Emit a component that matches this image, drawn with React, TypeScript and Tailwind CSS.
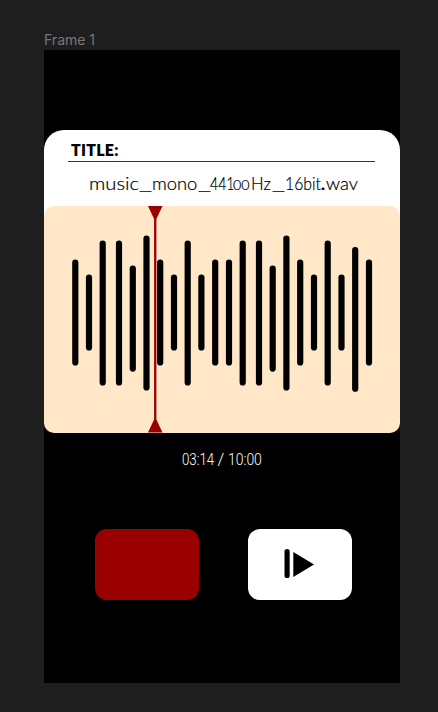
type Bar = [x: number, top: number, bottom: number];

const bars: Bar[] = [
  [31.3, 53.4, 159.5], [45, 68.4, 144.6], [58.7, 34.5, 179.5], [75, 34.5, 179.5],
  [88.8, 59.5, 165.7], [102.5, 29.5, 184.5], [116.2, 53.4, 159.5], [130, 68.4, 144.6],
  [143.7, 34.5, 179.5], [157.4, 68.4, 144.6], [171.2, 53.4, 159.5], [185, 53.4, 159.5],
  [198.7, 34.5, 179.5], [215, 34.5, 179.5], [228.7, 59.5, 165.7], [242.4, 29.5, 184.5],
  [256.2, 53.4, 159.5], [270, 68.4, 144.6], [283.7, 34.5, 179.5], [297.5, 68.4, 144.6],
  [311.2, 41, 185.8], [325, 53.4, 159.5],
];

function TitlePanel() {
  return (
    <header className="h-[100px] rounded-t-[20px] bg-white text-black">
      <div className="mr-[25px] ml-[24px] flex h-[32px] items-end border-b-[1.4px] border-[#333] pl-[3px]">
        <h1 className="font-['Lato',sans-serif] text-[16px] leading-[22px] font-extrabold tracking-[.25px]">TITLE:</h1>
      </div>
      <p className="flex h-[44px] items-baseline pt-[9px] pl-[45px] font-['Lato',sans-serif] text-[17px] font-light whitespace-nowrap [-webkit-text-stroke:0.2px_black]">
        <span className="w-[50px] origin-left scale-x-[1.19]">music</span>
        <span className="w-[13px] origin-left -translate-y-[1px] scale-x-[1.7]">_</span>
        <span className="w-[46px] origin-left scale-x-[1.08]">mono</span>
        <span className="w-[12px] origin-left -translate-y-[1px] scale-x-[1.7]">_</span>
        <span className="w-[23px] origin-left scale-x-[.83]">441</span>
        <span className="w-[18px] origin-left scale-x-[1.1] text-[13px]">00</span>
        <span className="w-[21px] origin-left scale-x-[.98]">Hz</span>
        <span className="w-[13px] origin-left -translate-y-[1px] scale-x-[1.7]">_</span>
        <span className="w-[36px] origin-left scale-x-[.93]">16bit</span>
        <span className="w-[5px] font-bold">.</span>
        <span className="origin-left scale-x-[1.08]">wav</span>
      </p>
    </header>
  );
}

function Waveform() {
  return (
    <section className="-mt-[24px] h-[226.5px] overflow-hidden rounded-[10px] bg-[#ffe7c7]">
      <svg width="356" height="226.5" viewBox="0 0 356 226.5" aria-label="Waveform">
        {bars.map(([x, top, bottom]) => (
          <rect key={x} x={x - 3.1} y={top} width="6.2" height={bottom - top} rx="3.1" />
        ))}
        <path d="M104 0h14.5l-6.1 13v200.5l6.1 13H104l6.1-13V13Z" fill="#9b0000" />
      </svg>
    </section>
  );
}

export default function App() {
  return (
    <main className="h-[712px] w-[438px] overflow-hidden bg-[#1e1e1e] pt-[30px] pl-[44px]">
      <div className="h-[20px] font-['Inter',sans-serif] text-[14px] leading-[20px] text-[#777]">Frame 1</div>
      <div className="h-[632.5px] w-[356px] bg-black pt-[80px]">
        <TitlePanel />
        <Waveform />
        <div className="mt-[15.5px] flex h-[24px] items-center justify-center font-['Roboto',sans-serif] text-[17px] font-light text-white">
          <time className="flex whitespace-nowrap">
            <span className="w-[32px] origin-left scale-x-[.78]">03:14</span>
            <span className="w-[14px] text-center">/</span>
            <span className="w-[34px] origin-left scale-x-[.82]">10:00</span>
          </time>
        </div>
        <div className="mt-[56.5px] flex gap-[49px] pl-[51px]">
          <button aria-label="Record" className="h-[71px] w-[104px] rounded-[12px] bg-[#9b0000]" />
          <button aria-label="Play" className="h-[71px] w-[103.5px] rounded-[12px] bg-white">
            <svg width="103.5" height="71" viewBox="0 0 103.5 71">
              <rect x="36.5" y="20" width="5.2" height="29" rx="2.6" />
              <path d="m45.3 23 20.7 12.4-20.7 12.5Z" />
            </svg>
          </button>
        </div>
      </div>
    </main>
  );
}
